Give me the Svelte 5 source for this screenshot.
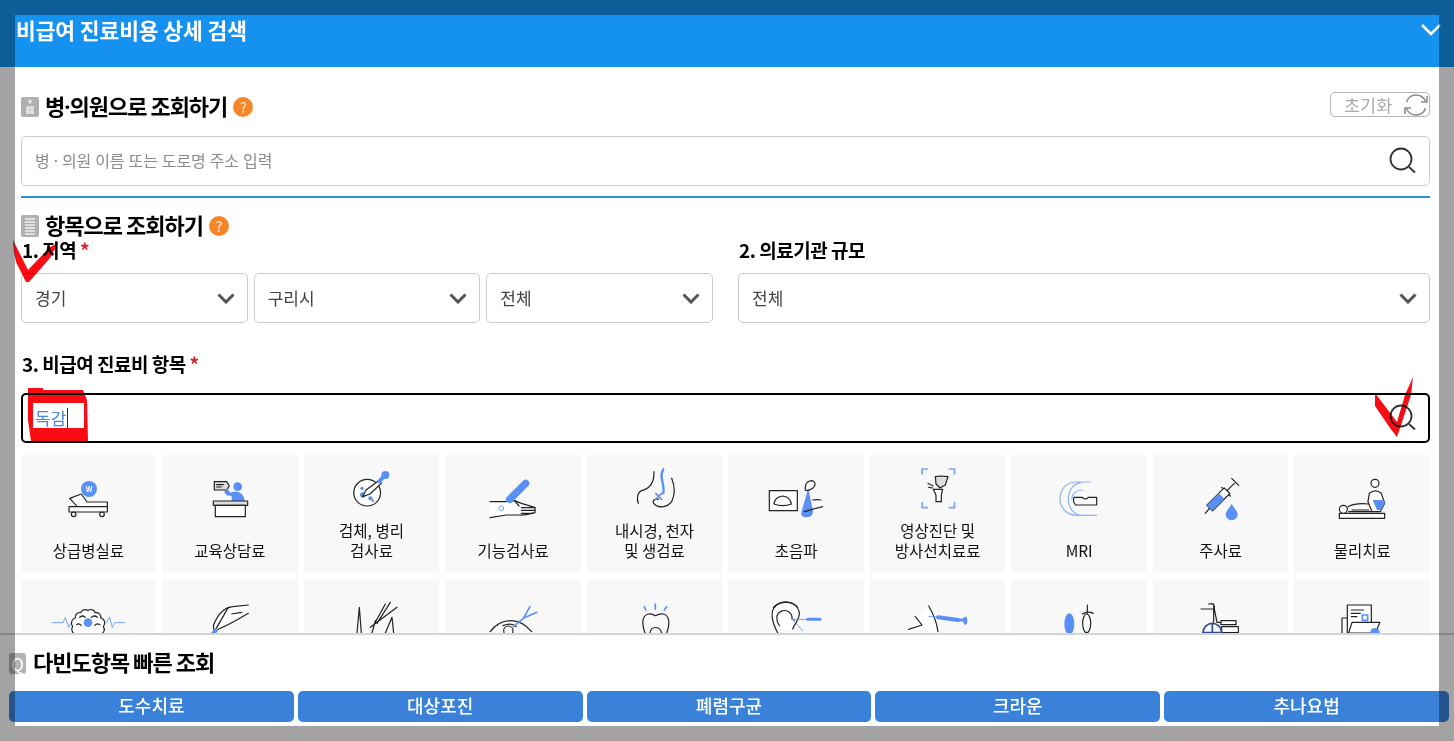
<script>
  const selects = ['경기', '구리시', '전체'];
  const row1 = [
    ['상급병실료'], ['교육상담료'], ['검체, 병리', '검사료'], ['기능검사료'], ['내시경, 천자', '및 생검료'],
    ['초음파'], ['영상진단 및', '방사선치료료'], ['MRI'], ['주사료'], ['물리치료']
  ];
  const cells = [...row1, ...Array(10).fill([])];
  const quick = ['도수치료', '대상포진', '폐렴구균', '크라운', '추나요법'];
</script>

{#snippet chevron()}
  <svg class="chev" width="18" height="11" viewBox="0 0 18 11"><path d="M1.500 1.500 9 9l7.500-7.500" /></svg>
{/snippet}

{#snippet lens()}
  <svg class="lens" width="28" height="28" viewBox="0 0 28 28"><circle cx="12" cy="12" r="10.500" /><path d="M20 20l6 5.500" /></svg>
{/snippet}

{#snippet help()}
  <span class="help">?</span>
{/snippet}

<div class="page">
  <header class="top">
    <h1>비급여 진료비용 상세 검색</h1>
    <svg class="topchev" width="22" height="13" viewBox="0 0 22 13"><path d="M2 2l9 9 9-9" /></svg>
  </header>

  <main class="body">
    <div class="title-row first">
      <span class="tile">
        <svg width="18" height="20" viewBox="0 0 18 20"><path d="M9 2v5M7 4.500h4M6 10h2v2H6zM10 10h2v2h-2zM6 14h2v2H6zM10 14h2v2h-2z" /></svg>
      </span>
      <h2>병<span class="dot">·</span>의원으로 조회하기</h2>
      {@render help()}
      <button class="reset">
        <span>초기화</span>
        <svg width="26" height="24" viewBox="0 0 26 24"><path d="M3.500 9C5 4.500 9 2 13 2c4 0 7.500 2.200 9.500 6M22.500 15c-1.500 4.500-5.500 7-9.500 7-4 0-7.500-2.200-9.500-6" /><path d="M24 3v6h-6M2 21v-6h6" /></svg>
      </button>
    </div>

    <div class="field">
      <input class="text" placeholder="병 · 의원 이름 또는 도로명 주소 입력" />
      {@render lens()}
    </div>

    <div class="rule"></div>

    <div class="title-row second">
      <span class="tile list">
        <svg width="18" height="22" viewBox="0 0 18 22"><path d="M4 4h10M4 7h10M4 10h10M4 13h10M4 16h10M4 19h10" /></svg>
      </span>
      <h2>항목으로 조회하기</h2>
      {@render help()}
    </div>

    <div class="filters">
      <section>
        <h3>1. 지역 <em>*</em></h3>
        <div class="triple">
          {#each selects as s}
            <div class="select"><span>{s}</span>{@render chevron()}</div>
          {/each}
        </div>
      </section>
      <section>
        <h3>2. 의료기관 규모</h3>
        <div class="select"><span>전체</span>{@render chevron()}</div>
      </section>
    </div>

    <h3 class="third">3. 비급여 진료비 항목 <em>*</em></h3>
    <div class="field active">
      <span class="typed">독감</span><span class="caret"></span>
      {@render lens()}
    </div>

    <div class="grid">
      {#each cells as lines, i}
        <div class="cell">
          <svg class="ico" viewBox="0 0 180 180">
            {#if i === 0}
              <circle class="b" cx="93" cy="87" r="24" />
              <text class="w" x="93" y="95">W</text>
              <path class="f" d="M35 115 70 102 87 126H148V140H58Z" />
              <rect class="f" x="33" y="140" width="115" height="16" />
              <circle cx="47" cy="163" r="7" /><circle cx="132" cy="163" r="7" />
            {:else if i === 1}
              <path class="g" d="M43 65H80L88 78 80 90H43Z" /><path d="M50 74H70M50 81H64" />
              <circle class="b" cx="113" cy="80" r="13" />
              <path class="b" d="M72 95 82 88 92 98 100 95Q130 92 135 125H95V108L80 106Z" />
              <rect class="g" x="40" y="123" width="103" height="13" />
              <rect class="f" x="46" y="136" width="90" height="34" />
            {:else if i === 2}
              <circle class="f" cx="75.500" cy="98" r="40" />
              <circle class="b" cx="62" cy="105" r="8" /><circle class="b" cx="60" cy="85" r="5" />
              <circle class="b" cx="85" cy="115" r="6" /><circle class="b" cx="92" cy="122" r="4" />
              <path class="f" d="M62 110 72 90 110 62 118 70 84 102Z" />
              <circle class="b" cx="130" cy="45" r="12" /><path class="bl thick" d="M112 64 128 47" />
            {:else if i === 3}
              <path class="f" d="M21 125H65L95 122 115 130Q135 135 156 143V158Q130 166 110 165L70 165 21 173" />
              <path d="M115 143H156M115 151H156M115 160H150M95 122 108 138" />
              <path class="bl pill" d="M80 118 128 70" />
              <circle class="bl thin" cx="55" cy="145" r="7" />
            {:else if i === 4}
              <path d="M87 35C88 65 75 85 50 92 38 96 34 115 40 130M140 55C150 80 150 105 140 125 125 145 95 145 85 128 82 122 90 116 100 118" />
              <path class="bl wide" d="M115 28C100 50 120 70 115 100" /><path class="bl mid" d="M92 100 110 118M110 100 92 118" />
            {:else if i === 5}
              <rect class="f" x="10" y="92" width="84" height="60" />
              <path d="M24 132Q25 112 50 108 72 110 76 132 50 142 24 132Z" />
              <path class="b" d="M127 85 140 150Q145 172 118 172 100 170 108 150Z" />
              <path d="M118 90Q115 62 140 62 155 70 140 85 125 95 118 90M140 120Q150 118 165 120M115 155Q130 150 170 140" />
            {:else if i === 6}
              <path class="bl soft3" d="M42.500 42V27H58M124 27H139.500V42M42.500 128V143H58M124 143H139.500V128" />
              <path class="g" d="M82 50 98 48 120 50 112 75 96 84 84 72Z" />
              <path class="f" d="M76 88H104L100 105V125H84V105Z" />
              <path d="M60 70 75 78M62 82 74 84" />
            {:else if i === 7}
              <path class="bl soft" d="M125 66H85C45 66 33 95 33 116 33 140 50 166 85 166H143M95 68C70 72 58 95 58 116 58 140 72 166 100 166M68 116C70 100 80 92 100 90" />
              <path d="M75 112H100Q108 122 118 112H143V135H80Q70 125 75 112Z" />
            {:else if i === 8}
              <path d="M43 160 56 144M108 92 130 70M92 82 118 108M122 55 143 76" />
              <path class="f" d="M47.500 135.500 99.500 83.500 116.500 100.500 64.500 152.500Z" />
              <path class="b" d="M47.500 135.500 83.500 99.500 100.500 116.500 64.500 152.500Z" />
              <path class="b" d="M122 132C112 148 104 155 104 163A18 18 0 0 0 140 163C140 155 132 148 122 132Z" />
            {:else if i === 9}
              <rect class="f" x="22" y="160" width="136" height="15" />
              <circle class="f" cx="34" cy="148" r="12" />
              <path d="M48 140Q70 128 110 132M50 155H120M60 150H110" />
              <circle class="f" cx="129" cy="70" r="12" />
              <path class="f" d="M112 100Q130 85 148 100L158 130 145 155H120L108 125Z" />
              <path class="b" d="M122 120H155L158 130 148 150H135Z" />
            {:else if i === 10}
              <path class="bl thin" d="M-18 116H15L22 100 32 130 40 116M145 116 155 100 163 130 170 116H200" />
              <path class="f" d="M50 150C42 145 38 135 44 128 36 118 42 104 52 102 50 90 62 84 68 86 74 74 86 76 90 80 96 74 108 76 112 86 122 84 130 92 128 102 140 104 144 118 136 128 142 136 138 146 130 150" />
              <path d="M65 100Q75 92 82 100M100 100Q108 92 118 100M56 122Q62 116 70 124M110 124Q118 116 126 122" />
              <circle class="b" cx="90" cy="116" r="13" />
            {:else if i === 11}
              <path class="f" d="M145 63 100 68C75 70 55 85 40 125L42 140C60 135 80 125 110 108L145 88" />
              <path d="M85 70 45 140M95 90 125 85" /><path class="bl thick" d="M48 138 38 150" />
            {:else if i === 12}
              <path d="M130 60 100 115M145 55 105 118M165 70 85 130M45 147 52 70 58 147M90 147 100 110M130 147 150 100 155 147" />
            {:else if i === 13}
              <path d="M22 143C40 118 65 110 85 110 110 110 130 125 146 143M60 125Q85 115 100 128" />
              <circle cx="76" cy="140" r="14" />
              <path class="bl mid" d="M91 128 121 103 141 68M121 103 161 85" />
            {:else if i === 14}
              <path d="M60 147C50 120 50 95 70 90 80 88 91 95 91 95 105 88 115 90 115 90 135 95 135 120 125 147M75 147C78 125 105 125 110 147" />
              <path class="bl mid" d="M58 68 62 78M91 60V76M125 68 118 78" />
            {:else if i === 15}
              <path class="f" d="M35 146C18 115 10 80 30 65 50 48 90 48 100 85 102 105 85 120 80 135" />
              <path d="M40 125C30 110 28 90 45 82 60 75 80 85 78 105M22 70C40 50 80 50 95 70" />
              <path class="bl thin" d="M85 106H125M82 108 110 140" />
              <path class="bl pill2" d="M125 106H162" /><circle class="b" cx="83" cy="108" r="4" />
            {:else if i === 16}
              <path class="f" d="M62 66Q85 105 90 143L2 136 30 100Z" stroke="none" />
              <path d="M62 66Q85 105 90 143M2 136 42 123 22 98" />
              <path class="bl thin" d="M62 98H90" />
              <path class="bl thick" d="M90 100 150 108" /><path class="bl pill2" d="M150 108H170" />
              <ellipse class="b" cx="172" cy="110" rx="6" ry="12" />
            {:else if i === 17}
              <ellipse class="b" cx="61" cy="120" rx="15" ry="32" />
              <ellipse class="f" cx="113" cy="118" rx="12" ry="28" />
              <path d="M115 63V88M100 90Q115 80 133 88" />
            {:else if i === 18}
              <path d="M60 58Q72 60 70 75L78 115H133M30 75H68M52 60H68V115" />
              <rect class="f" x="90" y="110" width="45" height="12" />
              <rect class="f" x="92" y="128" width="50" height="18" />
              <circle class="navy" cx="64" cy="146" r="28" /><path class="navy" d="M64 118V174M36 146H92" />
            {:else if i === 19}
              <path d="M30 102H46M30 102V146" />
              <rect class="f" x="46" y="63" width="72" height="84" />
              <path d="M58 78H95M58 88H85M58 98H75" />
              <rect class="bl mid" x="91" y="93" width="16" height="16" />
              <path class="f" d="M50 147 60 115H144L130 147Z" />
              <circle class="b" cx="129" cy="146" r="14" />
            {/if}
          </svg>
          {#if lines.length}
            <p class="label">{#each lines as l}<span>{l}</span>{/each}</p>
          {/if}
        </div>
      {/each}
    </div>
  </main>

  <footer class="quick">
    <div class="quick-title"><span class="q">Q</span><h2>다빈도항목 빠른 조회</h2></div>
    <div class="quick-btns">
      {#each quick as q}<button>{q}</button>{/each}
    </div>
  </footer>

  <div class="spot"></div>

  <svg class="marks" width="1454" height="741" viewBox="0 0 1454 741">
    <path d="M13 240 20 254 28 270 50 247 58 243 50 258 29 282H26L16 262 14 252Z" />
    <path fill-rule="evenodd" d="M28 388H43V390H83L87 400 88 441H31L28 420ZM33 403V428H84V403Z" />
    <path d="M1375 393 1397 422 1405 395 1413 377 1411 395 1397 437 1390 428 1375 406Z" />
  </svg>
</div>

<style>
  :global(body) { margin: 0; background: #fff; }
  * { box-sizing: border-box; }
  .page {
    position: relative;
    width: 1454px;
    height: 741px;
    overflow: hidden;
    font-family: "Noto Sans CJK KR", "Noto Sans", sans-serif;
    color: #000;
  }
  h1, h2, h3, p { margin: 0; }
  .top {
    height: 67px;
    background: #1592f0;
    color: #fff;
    display: flex;
    justify-content: space-between;
    padding: 15px 12px 0 16px;
  }
  h1 { font-size: 21.500px; font-weight: 700; line-height: 30px; letter-spacing: -0.1px; }
  .topchev { margin-top: 8px; }
  .topchev path { fill: none; stroke: #fff; stroke-width: 2.500; }

  .body { padding: 0 24px 0 21px; }
  .title-row { display: flex; align-items: center; }
  .title-row.first { height: 30px; margin-top: 25px; margin-bottom: 14px; }
  .title-row.second { height: 28px; margin-top: 14px; }
  h2 { font-size: 22px; font-weight: 700; letter-spacing: -1px; line-height: 28px; padding-bottom: 4px; }
  .dot { font-family: "Noto Sans", sans-serif; }
  .tile {
    width: 18px; height: 20px; background: #b0b0b0; border-radius: 2px;
    margin-right: 6px; flex: none; display: flex;
  }
  .tile.list { height: 22px; }
  .tile path { fill: none; stroke: #eee; stroke-width: 1.300; }
  .help {
    width: 20px; height: 20px; border-radius: 50%; background: #f5862a; color: #ffe2c8;
    font-size: 14px; line-height: 20px; text-align: center; margin-left: 6px; flex: none; font-weight: 500; letter-spacing: 0;
  }
  .reset {
    margin-left: auto; align-self: flex-start;
    width: 100px; height: 25px;
    background: #fff; border: 1px solid #b4b4b4; border-radius: 5px;
    color: #aaa; font: 400 17.500px/23px "Noto Sans CJK KR", sans-serif;
    display: flex; align-items: center; justify-content: space-between;
    padding: 0 0 0 13px;
  }
  .reset svg { fill: none; stroke: #888; stroke-width: 1.500; }
  .field {
    height: 50px; border: 1px solid #ccc; border-radius: 5px; background: #fff;
    display: flex; align-items: center; padding: 0 12px 0 13px;
  }
  .field.active { border: 2px solid #000; padding-left: 12px; padding-right: 11px; }
  .text {
    flex: 1; border: 0; outline: 0; background: none; padding: 0; letter-spacing: -0.1px;
    font: 400 16px "Noto Sans", "Noto Sans CJK KR", sans-serif;
  }
  .text::placeholder { color: #8a8a8a; opacity: 1; }
  .lens { margin-left: auto; }
  .lens circle, .lens path { fill: none; stroke: #333; stroke-width: 1.800; }
  .rule { height: 2px; background: #2a8fd8; margin-top: 10px; }

  .filters { display: grid; grid-template-columns: 692px 692px; gap: 25px; }
  h3 { font-size: 19px; font-weight: 700; line-height: 20px; letter-spacing: -0.5px; margin-bottom: 13px; padding-left: 1px; }
  h3 em { color: #d8232a; font-style: normal; }
  .third { margin-top: 31px; margin-bottom: 19px; }
  .triple { display: grid; grid-template-columns: repeat(3, 1fr); gap: 6px; }
  .select {
    height: 50px; border: 1px solid #ccc; border-radius: 5px; background: #fff;
    display: flex; align-items: center; justify-content: space-between;
    padding: 0 12px 0 13px; font-size: 17px; color: #444;
  }
  .select span, .typed { position: relative; top: -1px; }
  .chev path { fill: none; stroke: #555; stroke-width: 3; }
  .typed { color: #4a86d8; font-size: 17px; }
  .caret { width: 1px; height: 20px; background: #234; margin-left: 1px; }

  .grid { display: grid; grid-template-columns: repeat(10, 1fr); gap: 6px; margin: 12px 0 0 -0.3px; }
  .cell {
    height: 118px; background: #f8f8f8; padding: 5px 0 13px;
    display: flex; flex-direction: column; align-items: center;
  }
  .ico {
    width: 60px; height: 60px; flex: none; overflow: visible;
    fill: none; stroke: #222; stroke-width: 3.600; stroke-linecap: round; stroke-linejoin: round;
  }
  .ico .f { fill: #fff; }
  .ico .g { fill: #ddd; }
  .ico .b { fill: #5a90f5; stroke: none; }
  .ico .bl { stroke: #5a90f5; fill: none; }
  .ico .thin { stroke-width: 2.500; }
  .ico .mid { stroke-width: 5; }
  .ico .wide { stroke-width: 7; }
  .ico .thick { stroke-width: 12; }
  .ico .pill { stroke-width: 22; }
  .ico .pill2 { stroke-width: 9; }
  .ico .soft { stroke: #8fb2f2; stroke-width: 3.500; }
  .ico .soft3 { stroke: #7aa5f0; stroke-width: 5; }
  .ico .navy { stroke: #2f4f8f; stroke-width: 5; }
  .ico .w { fill: #fff; stroke: none; font-size: 22px; font-weight: 700; text-anchor: middle; }
  .label {
    margin-top: auto; font-size: 15.500px; line-height: 20px; text-align: center; color: #111;
  }
  .label span { display: block; }

  .quick {
    position: absolute; left: 0; right: 0; top: 633px; bottom: 0;
    background: #fff; border-top: 2px solid #d4d4d4;
    padding: 17px 5px 0 9px;
  }
  .quick-title { display: flex; align-items: center; height: 22px; margin-bottom: 17px; }
  .q {
    width: 17px; height: 21px; background: #b4b4b4; color: #fff; border-radius: 3px;
    font-size: 17px; line-height: 21px; text-align: center; margin-right: 7px; flex: none;
  }
  .quick-btns { display: flex; gap: 4px; }
  .quick-btns button {
    flex: 1; height: 31px; border: 0; border-radius: 5px; background: #3a82d9; color: #fff;
    font: 500 18px/28px "Noto Sans CJK KR", sans-serif; padding: 0 0 3px;
  }

  .spot {
    position: absolute; left: 15px; top: 15px; width: 1424px; height: 711px;
    box-shadow: 0 0 0 2000px rgba(0, 0, 0, 0.36);
    pointer-events: none;
  }
  .marks { position: absolute; left: 0; top: 0; pointer-events: none; mix-blend-mode: multiply; }
  .marks path { fill: #fa0c14; }
</style>
